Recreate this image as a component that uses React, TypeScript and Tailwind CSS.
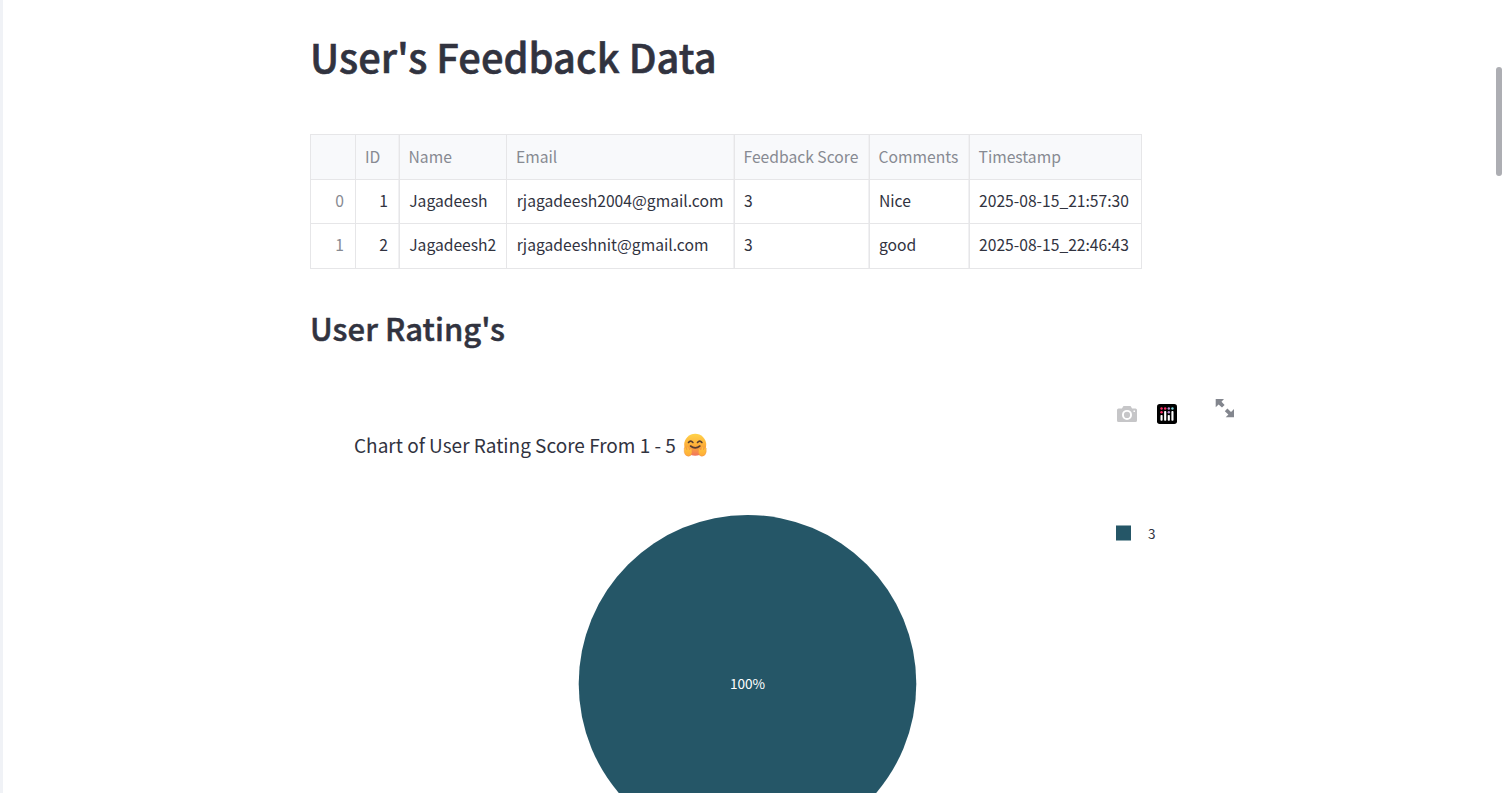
import React from "react";

const columns = ["", "ID", "Name", "Email", "Feedback Score", "Comments", "Timestamp"];
const rows = [
  ["0", "1", "Jagadeesh", "rjagadeesh2004@gmail.com", "3", "Nice", "2025-08-15_21:57:30"],
  ["1", "2", "Jagadeesh2", "rjagadeeshnit@gmail.com", "3", "good", "2025-08-15_22:46:43"],
];

const headPadding = ["", "pl-[9px]", "pl-[8.5px]", "pl-[9px]", "pl-[8.5px]", "pl-[8.5px]", "pl-[8.5px]"];
const cellStyle = [
  "pr-[11px] text-right text-[#878a92]",
  "pr-[11px] text-right",
  "pl-[9.2px]",
  "pl-[9.8px]",
  "pl-[9px]",
  "pl-[9px]",
  "pl-[9px]",
];
const softEdge = [1, 3, 4, 5];
const edge = (i: number) => (softEdge.includes(i) ? " shadow-[inset_-1px_0_0_#f1f1f3]" : "");

function FeedbackTable() {
  return (
    <table className="mt-[53px] w-[832px] table-fixed border-collapse text-[15.67px] leading-[24px]">
      <colgroup>
        <col className="w-[45px]" />
        <col className="w-[44px]" />
        <col className="w-[107px]" />
        <col className="w-[228px]" />
        <col className="w-[135px]" />
        <col className="w-[100px]" />
        <col className="w-[172px]" />
      </colgroup>
      <thead>
        <tr className="h-[45px] bg-[#f8f9fb] text-left text-[#878a92]">
          {columns.map((c, i) => (
            <th
              key={c}
              className={"whitespace-nowrap border border-[#e6e6e8] p-0 font-normal " + headPadding[i] + edge(i)}
            >
              {c}
            </th>
          ))}
        </tr>
      </thead>
      <tbody>
        {rows.map((r) => (
          <tr key={r[0]} className="h-[44px] last:h-[45px]">
            {r.map((v, i) => (
              <td
                key={i}
                className={"whitespace-nowrap border border-[#e6e6e8] p-0 pb-[2px] " + cellStyle[i] + edge(i)}
              >
                {v}
              </td>
            ))}
          </tr>
        ))}
      </tbody>
    </table>
  );
}

function CameraIcon() {
  return (
    <svg className="h-[20px] w-[20px]" viewBox="0 0 20 20">
      <path
        fill="#c6c6c8"
        fillRule="evenodd"
        d="M1.5 4.500H5l1.200-2.200Q6.500 2 7 2H13Q13.500 2 13.800 2.300L15 4.500h3.500Q20 4.500 20 6V16.500Q20 18 18.500 18H1.500Q0 18 0 16.500V6Q0 4.500 1.500 4.500ZM10 5.900a5 5 0 1 0 0 10 5 5 0 0 0 0-10Zm0 1.900a3.100 3.100 0 1 1 0 6.200 3.100 3.100 0 0 1 0-6.200ZM16.500 6.600v1.400H18V6.600Z"
      />
    </svg>
  );
}

function PlotlyIcon() {
  return (
    <svg className="h-[20px] w-[20px]" viewBox="0 0 132 132">
      <rect width="132" height="132" rx="18" />
      <g fill="#ff2e6a">
        <circle cx="30" cy="30" r="8" />
        <circle cx="54" cy="30" r="8" />
        <circle cx="30" cy="54" r="8" />
      </g>
      <g fill="#b98fd0">
        <circle cx="78" cy="30" r="8" />
        <circle cx="78" cy="54" r="8" />
      </g>
      <circle cx="102" cy="30" r="8" fill="#7fd6dd" />
      <g fill="#fff">
        <rect x="23" y="72" width="14" height="38" rx="5" />
        <rect x="47" y="47" width="14" height="63" rx="5" />
        <rect x="71" y="72" width="14" height="38" rx="5" />
        <rect x="95" y="47" width="14" height="63" rx="5" />
      </g>
    </svg>
  );
}

function ExpandIcon() {
  return (
    <svg className="h-[19px] w-[19px]" viewBox="0 0 19 19" fill="#83868e">
      <path d="M.7 0H9L6.500 2.800 9.600 6 7 8.600 3.600 5.400.7 8.300Z" />
      <path d="M19 18.300H10.700L13.400 15.600 9.800 12.200 12.400 9.600 16 13 19 10Z" />
    </svg>
  );
}

function HugEmoji() {
  return (
    <svg className="ml-[7px] h-[24px] w-[24px]" viewBox="0 0 24 24">
      <defs>
        <linearGradient id="face" x1="0" y1="0" x2="0" y2="1">
          <stop offset="0" stopColor="#ffd34a" />
          <stop offset=".55" stopColor="#fdac38" />
          <stop offset="1" stopColor="#f0735e" />
        </linearGradient>
        <linearGradient id="hand" x1="0" y1="0" x2="0" y2="1">
          <stop offset="0" stopColor="#ffc83c" />
          <stop offset="1" stopColor="#ffab38" />
        </linearGradient>
      </defs>
      <circle cx="12.200" cy="11.800" r="11" fill="url(#face)" />
      <g fill="none" stroke="#573c30" strokeWidth="1.600" strokeLinecap="round">
        <path d="M5.500 9.500Q7.700 6.700 9.900 9.500M14.500 9.500Q16.700 6.700 18.900 9.500M7.500 13Q12.200 16.700 16.900 13" />
      </g>
      <g fill="url(#hand)" stroke="#ee8a4c" strokeWidth=".4">
        <path d="M1.200 15Q2 13.500 3 15L4 17 3.800 14.500Q4.800 13 5.700 14.800L6.500 17 7.700 15.500Q9 15 8.800 16.500L9 19.500Q8.500 23.200 5.500 23.300 1.800 23 1.200 19Z" />
        <path d="M23.200 15Q22.400 13.500 21.400 15L20.400 17 20.600 14.500Q19.600 13 18.700 14.800L17.900 17 16.700 15.500Q15.400 15 15.600 16.500L15.400 19.500Q15.900 23.200 18.900 23.300 22.600 23 23.200 19Z" />
      </g>
    </svg>
  );
}

function RatingChart() {
  return (
    <section className="mt-[43px] w-[925px]">
      <div className="flex justify-end">
        <div className="flex gap-[20px] pt-[12px]">
          <CameraIcon />
          <PlotlyIcon />
        </div>
        <div className="ml-[38px] mr-px pt-[7px]">
          <ExpandIcon />
        </div>
      </div>
      <div className="ml-[44px] flex h-[30px] items-center pt-[12px] text-[19px] leading-[28px]">
        <span className="whitespace-nowrap">Chart of User Rating Score From 1 - 5</span>
        <HugEmoji />
      </div>
      <div className="mt-[61px] flex">
        <svg className="ml-[268px] h-[339px] w-[339px] shrink-0" viewBox="0 0 339 339">
          <circle cx="169.500" cy="168.800" r="168.800" fill="#255667" />
          <text x="169.500" y="174" fill="#fff" fontSize="13.6" textAnchor="middle">
            100%
          </text>
        </svg>
        <div className="ml-[199px] mt-[10px] flex h-[16px] items-start text-[13.5px] leading-[16px]">
          <span className="h-[16px] w-[15px] border-y border-[#8fa9b1] bg-[#255667]" />
          <span className="ml-[17px]">3</span>
        </div>
      </div>
    </section>
  );
}

export default function App() {
  return (
    <div className="flex h-[793px] w-[1502px] overflow-hidden bg-white font-['Noto_Sans_CJK_SC',sans-serif] text-[#31333f]">
      <aside className="w-[3px] shrink-0 bg-[#f0f2f6]" />
      <main className="min-w-0 flex-1 pl-[307px] pt-[31px]">
        <h1 className="whitespace-nowrap text-[39.8px] font-medium leading-[50px] tracking-[0.07px] [-webkit-text-stroke:0.6px_#31333f]">
          User's Feedback Data
        </h1>
        <FeedbackTable />
        <h2 className="mt-[38px] whitespace-nowrap text-[31px] font-medium leading-[42px] tracking-[0.07px] [-webkit-text-stroke:0.5px_#31333f]">
          User Rating's
        </h2>
        <RatingChart />
      </main>
      <div className="w-[6px] shrink-0 pt-[67px]">
        <div className="h-[109px] rounded-[3px] bg-[#adaeb3]" />
      </div>
    </div>
  );
}
